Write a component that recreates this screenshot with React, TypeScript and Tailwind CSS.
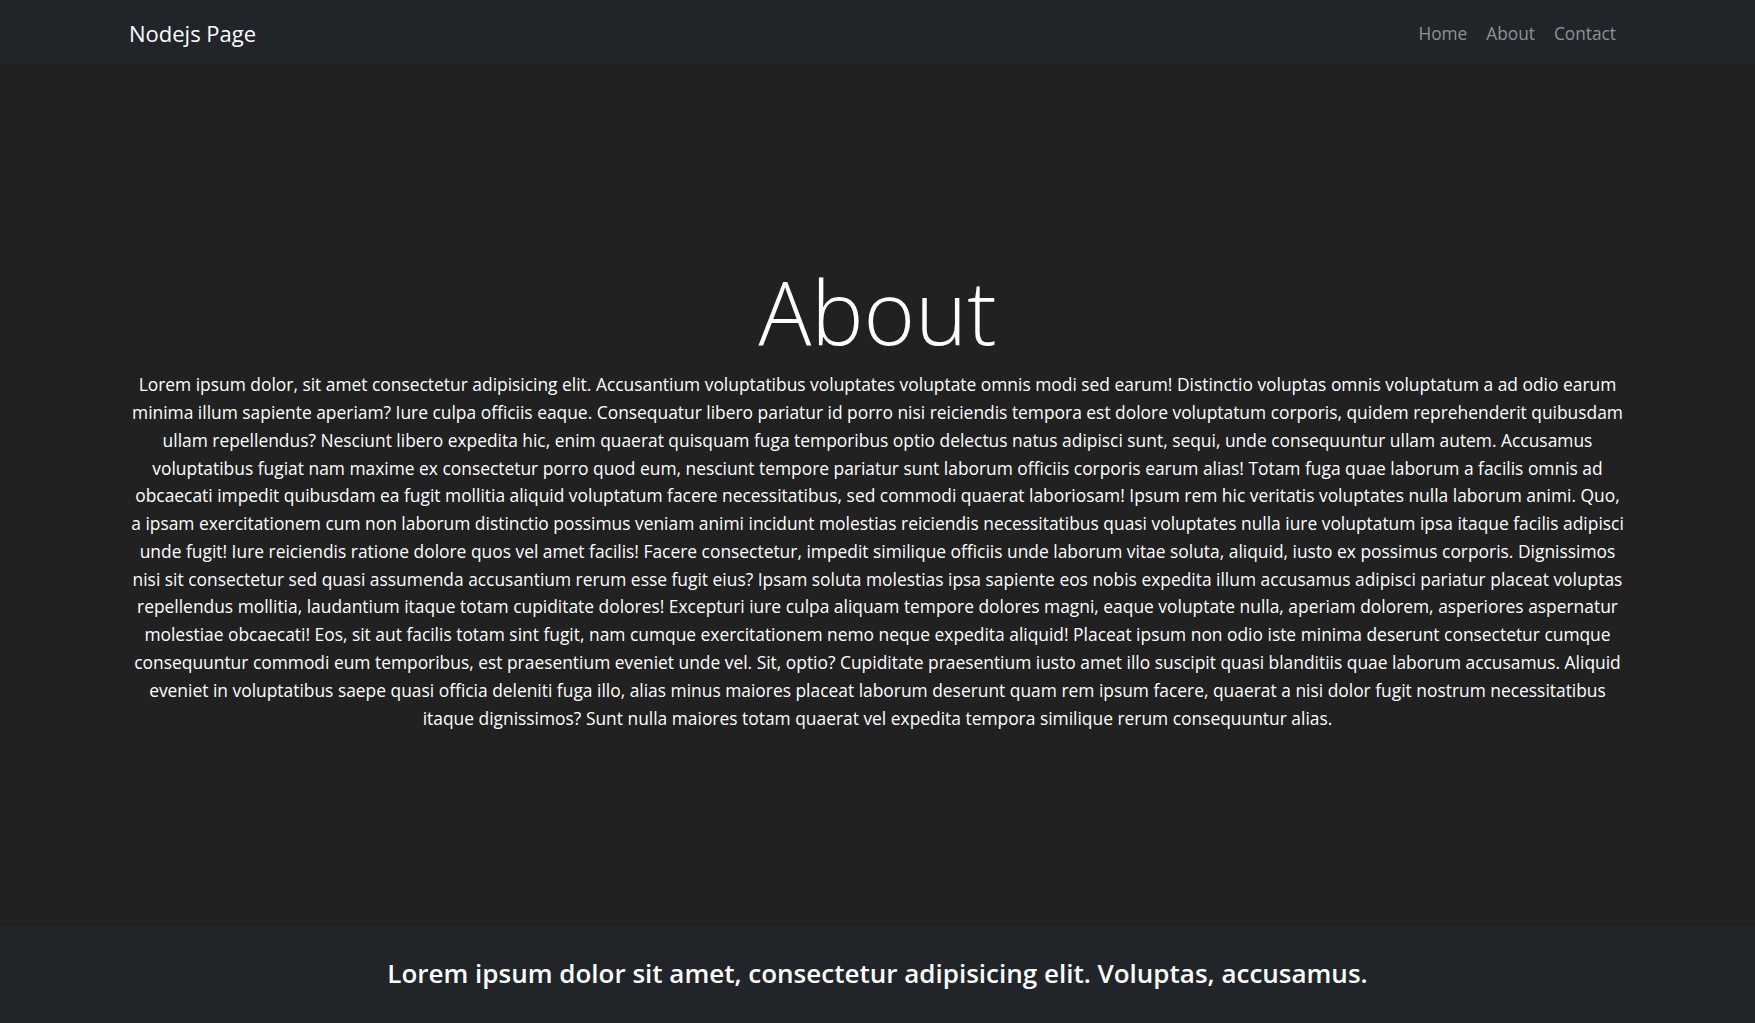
import React from "react";

const lines: string[] = [
  "Lorem ipsum dolor, sit amet consectetur adipisicing elit. Accusantium voluptatibus voluptates voluptate omnis modi sed earum! Distinctio voluptas omnis voluptatum a ad odio earum",
  "minima illum sapiente aperiam? Iure culpa officiis eaque. Consequatur libero pariatur id porro nisi reiciendis tempora est dolore voluptatum corporis, quidem reprehenderit quibusdam",
  "ullam repellendus? Nesciunt libero expedita hic, enim quaerat quisquam fuga temporibus optio delectus natus adipisci sunt, sequi, unde consequuntur ullam autem. Accusamus",
  "voluptatibus fugiat nam maxime ex consectetur porro quod eum, nesciunt tempore pariatur sunt laborum officiis corporis earum alias! Totam fuga quae laborum a facilis omnis ad",
  "obcaecati impedit quibusdam ea fugit mollitia aliquid voluptatum facere necessitatibus, sed commodi quaerat laboriosam! Ipsum rem hic veritatis voluptates nulla laborum animi. Quo,",
  "a ipsam exercitationem cum non laborum distinctio possimus veniam animi incidunt molestias reiciendis necessitatibus quasi voluptates nulla iure voluptatum ipsa itaque facilis adipisci",
  "unde fugit! Iure reiciendis ratione dolore quos vel amet facilis! Facere consectetur, impedit similique officiis unde laborum vitae soluta, aliquid, iusto ex possimus corporis. Dignissimos",
  "nisi sit consectetur sed quasi assumenda accusantium rerum esse fugit eius? Ipsam soluta molestias ipsa sapiente eos nobis expedita illum accusamus adipisci pariatur placeat voluptas",
  "repellendus mollitia, laudantium itaque totam cupiditate dolores! Excepturi iure culpa aliquam tempore dolores magni, eaque voluptate nulla, aperiam dolorem, asperiores aspernatur",
  "molestiae obcaecati! Eos, sit aut facilis totam sint fugit, nam cumque exercitationem nemo neque expedita aliquid! Placeat ipsum non odio iste minima deserunt consectetur cumque",
  "consequuntur commodi eum temporibus, est praesentium eveniet unde vel. Sit, optio? Cupiditate praesentium iusto amet illo suscipit quasi blanditiis quae laborum accusamus. Aliquid",
  "eveniet in voluptatibus saepe quasi officia deleniti fuga illo, alias minus maiores placeat laborum deserunt quam rem ipsum facere, quaerat a nisi dolor fugit nostrum necessitatibus",
  "itaque dignissimos? Sunt nulla maiores totam quaerat vel expedita tempora similique rerum consequuntur alias.",
];

const App: React.FC = () => {
  return (
    <div className="min-h-screen flex flex-col bg-[#212121] text-white font-['Open_Sans',sans-serif]">
      {/* Navbar */}
      <nav className="h-[64px] bg-[#212529] flex items-center justify-between pl-[129px] pr-[138px] pt-[2px]">
        <a href="#" className="text-[22px] text-white">
          Nodejs Page
        </a>
        <div className="flex items-center gap-[19px] pt-[2px] pr-[1px] text-[17.3px] text-[#8f9194]">
          <a href="#">Home</a>
          <a href="#">About</a>
          <a href="#">Contact</a>
        </div>
      </nav>

      {/* Content */}
      <main className="flex-1 flex flex-col items-center justify-center text-center">
        <h1 className="text-[88px] font-light leading-[1.2]">About</h1>
        <p className="mt-[7px] text-[17.4px] leading-[27.8px] whitespace-nowrap">
          {lines.map((line, i) => (
            <React.Fragment key={i}>
              {line}
              {i < lines.length - 1 && <br />}
            </React.Fragment>
          ))}
        </p>
      </main>

      {/* Footer */}
      <footer className="h-[96px] bg-[#212529] flex items-center justify-center pb-[4px]">
        <h4 className="text-[26px] font-semibold">
          Lorem ipsum dolor sit amet, consectetur adipisicing elit. Voluptas, accusamus.
        </h4>
      </footer>
    </div>
  );
};

export default App;
